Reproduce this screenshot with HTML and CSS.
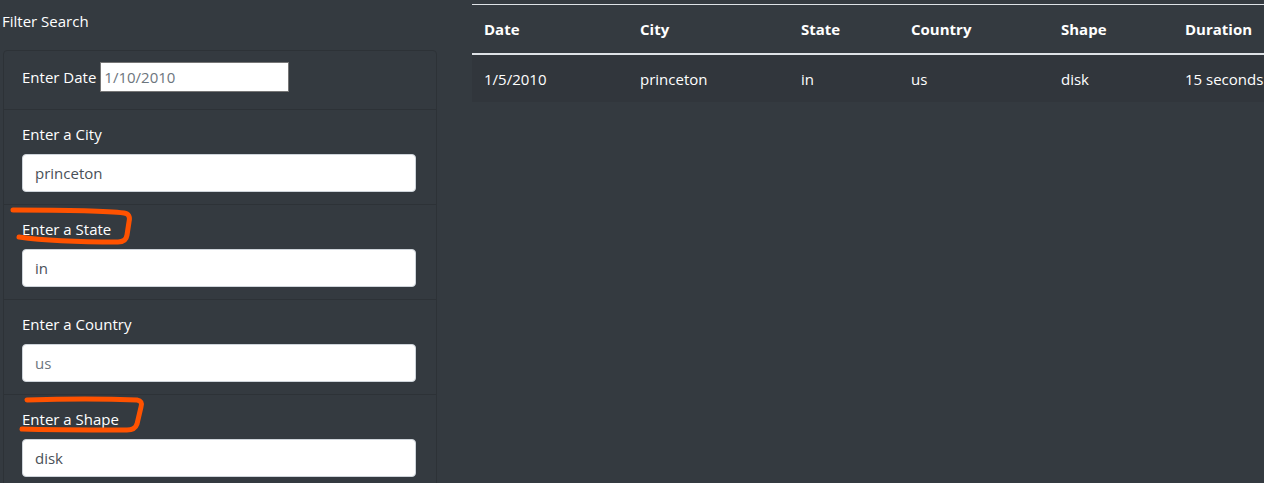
FILE: index.html
```html
<!DOCTYPE html>
<html lang="en">
<head>
<meta charset="utf-8">
<title>UFO Sightings</title>
<link rel="stylesheet" href="styles.css">
</head>
<body>
<div class="page">
  <aside class="filters">
    <div class="filter-title">Filter Search</div>
    <div class="card">
      <div class="item item-date">
        <label class="date-label" for="date">Enter Date</label>
        <input class="date-input" id="date" type="text" placeholder="1/10/2010">
      </div>
      <div class="item">
        <label class="label" for="city">Enter a City</label>
        <input class="control" id="city" type="text" value="princeton">
      </div>
      <div class="item">
        <label class="label" for="state">Enter a State</label>
        <input class="control" id="state" type="text" value="in">
      </div>
      <div class="item">
        <label class="label" for="country">Enter a Country</label>
        <input class="control" id="country" type="text" placeholder="us">
      </div>
      <div class="item">
        <label class="label" for="shape">Enter a Shape</label>
        <input class="control" id="shape" type="text" value="disk">
      </div>
    </div>
    <svg class="marks" width="450" height="483" viewBox="0 0 450 483" aria-hidden="true">
      <path d="M13 210 C 40 210, 100 210, 124 213 Q 131 214 129 222 L 127 235 Q 126 242 118 242 C 80 242, 40 240, 19 237" />
      <path d="M27 400 C 60 399, 110 399, 137 400 Q 143 401 141 407 L 137 424 Q 135 430 127 430 C 90 430, 50 430, 22 429" />
    </svg>
  </aside>
  <main class="results">
    <table class="table">
      <colgroup>
        <col class="c-date"><col class="c-city"><col class="c-state"><col class="c-country"><col class="c-shape"><col class="c-duration">
      </colgroup>
      <thead>
        <tr><th>Date</th><th>City</th><th>State</th><th>Country</th><th>Shape</th><th>Duration</th></tr>
      </thead>
      <tbody>
        <tr><td>1/5/2010</td><td>princeton</td><td>in</td><td>us</td><td>disk</td><td>15 seconds</td></tr>
      </tbody>
    </table>
  </main>
</div>
</body>
</html>
```

FILE: styles.css
```css
html, body {
  margin: 0;
  padding: 0;
  background: #343a40;
  color: #fff;
  font-family: "Open Sans", "Noto Sans", sans-serif;
  font-size: 15px;
  line-height: 1.5;
  overflow: hidden;
  height: 483px;
}

.page {
  display: flex;
  align-items: flex-start;
}

.filters {
  position: relative;
  width: 435px;
  flex: 0 0 435px;
  padding-left: 2px;
}

.filter-title {
  height: 43px;
  padding-top: 9px;
  font-size: 15px;
  line-height: 24px;
  box-sizing: border-box;
}

.card {
  margin-top: 7px;
  margin-left: 1px;
  border: 1px solid #2d3237;
  border-radius: 4px;
  display: flex;
  flex-direction: column;
}

.item {
  padding: 12px 20px 12px 18px;
  border-bottom: 1px solid #2d3237;
  display: flex;
  flex-direction: column;
}

.item:last-child {
  border-bottom: 0;
}

.item-date {
  flex-direction: row;
  align-items: flex-start;
  gap: 4px;
  height: 35px;
  padding-top: 11px;
}

.date-label {
  line-height: 30px;
}

.date-input {
  width: 189px;
  height: 30px;
  box-sizing: border-box;
  border: 1px solid #767676;
  padding: 1px 3px;
  font-family: inherit;
  font-size: 15px;
  color: #495057;
  background: #fff;
  outline: none;
  border-radius: 0;
}

.label {
  line-height: 24px;
  margin-bottom: 8px;
}

.control {
  height: 38px;
  box-sizing: border-box;
  width: 100%;
  padding: 6px 12px;
  border: 1px solid #ced4da;
  border-radius: 4px;
  background: #fff;
  color: #495057;
  font-family: inherit;
  font-size: 15px;
  line-height: 24px;
  outline: none;
}

.control::placeholder,
.date-input::placeholder {
  color: #6c757d;
  opacity: 1;
}

.marks {
  position: absolute;
  top: 0;
  left: 0;
  pointer-events: none;
}

.marks path {
  fill: none;
  stroke: #ff5200;
  stroke-width: 5;
  stroke-linecap: round;
  stroke-linejoin: round;
}

.results {
  flex: 1 1 auto;
  margin-left: 35px;
  padding-top: 4px;
  overflow: hidden;
}

.table {
  width: 880px;
  table-layout: fixed;
  border-collapse: collapse;
  color: #fff;
}

.c-date { width: 156px; }
.c-city { width: 161px; }
.c-state { width: 110px; }
.c-country { width: 150px; }
.c-shape { width: 124px; }
.c-duration { width: 179px; }

.table th,
.table td {
  padding: 12px;
  text-align: left;
  line-height: 24px;
  white-space: nowrap;
}

.table th {
  font-weight: 700;
  border-top: 1px solid #dee2e6;
  border-bottom: 2px solid #dee2e6;
}

.table tbody tr {
  background: #31363c;
}

.table td {
  padding-top: 12px;
  padding-bottom: 11px;
}
```
